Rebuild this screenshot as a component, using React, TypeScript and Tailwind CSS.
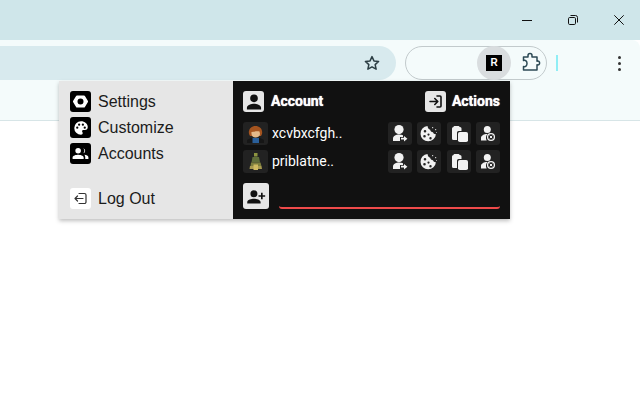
import React from "react";

const Svg = ({ children, size = 16, vb = "0 0 24 24" }: { children: React.ReactNode; size?: number; vb?: string }) => (
  <svg width={size} height={size} viewBox={vb} fill="currentColor">{children}</svg>
);

const Person = () => <path d="M12 3a4.600 4.600 0 1 1 0 9.200A4.600 4.600 0 0 1 12 3zM3.500 21v-2.200c0-3 5.600-4.600 8.500-4.600s8.500 1.600 8.500 4.600V21z" />;

const PersonGo = () => (
  <>
    <circle cx="11" cy="7.600" r="4.600" />
    <path d="M5 19v-2.600c0-2.400 3.400-3.900 6-3.900 1.600 0 3 .3 4 .8V15h-3v4z" />
    <path d="M13 15.800h3v-1.800l3.400 2.700-3.400 2.700v-1.800h-3z" />
  </>
);
const Cookie = () => (
  <>
    <path fillRule="evenodd" d="M10.500 4a7.700 7.700 0 1 0 8.400 8.200c-1.500.1-2.600-.7-2.900-2-1.500 0-2.700-1-2.800-2.500-1.500-.2-2.500-1.800-2.700-3.700zM8 8a1.300 1.300 0 1 1 0 2.600A1.300 1.300 0 0 1 8 8zM7.500 13a1.300 1.300 0 1 1 0 2.600 1.300 1.300 0 0 1 0-2.600zM11.500 11.500a1.100 1.100 0 1 1 0 2.200 1.100 1.100 0 0 1 0-2.200zM13.500 15a1.200 1.200 0 1 1 0 2.400 1.200 1.200 0 0 1 0-2.400z" />
    <rect x="15" y="5" width="1.200" height="1.200" opacity="0.8" />
    <rect x="18" y="7" width="1.200" height="1.200" opacity="0.8" />
    <rect x="19" y="10" width="1" height="1" opacity="0.6" />
  </>
);
const Paste = () => (
  <>
    <path d="M7.500 4h4a1 1 0 0 1 1 1h.5A1.500 1.500 0 0 1 14.500 6.500V9H11.500A1.500 1.500 0 0 0 10 10.500V18H6.500A1.500 1.500 0 0 1 5 16.500v-10A1.500 1.500 0 0 1 6.500 5h0a1 1 0 0 1 1-1z" />
    <rect x="11" y="10" width="10" height="10" rx="1.800" />
  </>
);
const PersonX = () => (
  <>
    <circle cx="11.300" cy="7.500" r="3.500" />
    <path d="M5 18.500v-2.700c0-2.200 3.300-3.800 6-3.800h.6A5.500 5.500 0 0 0 10 15a5 5 0 0 0 .7 3.500z" />
    <circle cx="15" cy="15" r="3.400" fill="none" stroke="currentColor" strokeWidth="1.300" />
    <path d="M13.700 13.700l2.600 2.600M16.300 13.700l-2.600 2.600" fill="none" stroke="currentColor" strokeWidth="1" />
  </>
);

const ActionBtn = ({ children }: { children: React.ReactNode }) => (
  <div className="w-6 h-[23px] rounded-[3px] bg-[#222222] text-[#f2f2f2]">
    <svg width="24" height="23" viewBox="0 0 24 23" fill="currentColor">{children}</svg>
  </div>
);

const Actions = () => (
  <div className="flex gap-[5.330px] ml-auto">
    <ActionBtn><PersonGo /></ActionBtn>
    <ActionBtn><Cookie /></ActionBtn>
    <ActionBtn><Paste /></ActionBtn>
    <ActionBtn><PersonX /></ActionBtn>
  </div>
);

const Avatar1 = () => (
  <svg width="25" height="23" viewBox="0 0 25 23">
    <rect width="25" height="23" rx="3" fill="#222222" />
    <path d="M4 21v-3l4-2h9l4 2v3z" fill="#161616" />
    <rect x="9.500" y="16" width="6.500" height="5" fill="#2a5f9a" />
    <path d="M6 12c-1-5 2.500-8 6.500-8s7.500 3 6.500 8l-1 2H7z" fill="#a5541f" />
    <path d="M8.500 10c2 0 5-1 8-.500l.5 2.500c0 2-2 3.500-4.500 3.500S8 14 8.500 10z" fill="#e3b98a" />
  </svg>
);
const Avatar2 = () => (
  <svg width="25" height="23" viewBox="0 0 25 23">
    <rect width="25" height="23" rx="3" fill="#222222" />
    <rect x="11" y="3" width="3.500" height="3.500" fill="#8d9440" />
    <path d="M9.500 7h6.500l1 5.500H8.500z" fill="#5f6d3a" />
    <path d="M8 12.500h9.500l1 3.500h-11z" fill="#7c7e3e" />
    <path d="M7 16h11.500l.5 3H6.500z" fill="#a79a50" />
    <path d="M10.500 14.500h4.500V20h-4.500z" fill="#d0bb62" />
  </svg>
);

const Row = ({ name, avatar }: { name: string; avatar: React.ReactNode }) => (
  <div className="flex items-center h-[23px]">
    {avatar}
    <span className="ml-[4px] text-[14px] text-white font-['Roboto',sans-serif]">{name}</span>
    <Actions />
  </div>
);

const MenuIcon = ({ children, light }: { children: React.ReactNode; light?: boolean }) => (
  <div className={`w-[21px] h-[21px] rounded-[3px] flex items-center justify-center ${light ? "bg-white text-[#333333]" : "bg-black text-white"}`}>
    {children}
  </div>
);

const MenuItem = ({ icon, label, light, className = "" }: { icon: React.ReactNode; label: string; light?: boolean; className?: string }) => (
  <div className={`flex items-center gap-[7px] h-[21px] ${className}`}>
    <MenuIcon light={light}>{icon}</MenuIcon>
    <span className="text-[16px] text-[#1b1b1b] font-['Liberation_Sans',sans-serif]">{label}</span>
  </div>
);

const HeadIcon = ({ children }: { children: React.ReactNode }) => (
  <div className="w-[21px] h-[21px] rounded-[3px] bg-[#e6e6e6] text-[#111111] flex items-center justify-center">
    {children}
  </div>
);

const headText = "text-[14px] font-bold text-white font-['Roboto',sans-serif] [text-shadow:0_0_1px_#ffffff]";

export default function App() {
  return (
    <div className="relative w-[640px] h-[400px] bg-white overflow-hidden font-['Liberation_Sans',sans-serif]">
      {/* Title strip */}
      <div className="h-10 bg-[#cfe6ea] flex justify-end items-center pr-4 gap-9 text-[#111111]">
        <div className="w-[10px] h-px bg-[#111111]" />
        <svg width="10" height="10" viewBox="0 0 10 10" fill="none" stroke="currentColor">
          <rect x="0.500" y="2.500" width="7" height="7" rx="1.200" />
          <path d="M2.500.5H7.500a2 2 0 0 1 2 2v5" />
        </svg>
        <svg width="10" height="10" viewBox="0 0 10 10" fill="none" stroke="currentColor">
          <path d="M.3.3l9.400 9.400M9.700.3L.3 9.700" />
        </svg>
      </div>

      {/* Toolbar */}
      <div className="h-10 bg-[#f4fbfb] rounded-tr-[8px] flex items-start pt-[6px]">
        <div className="w-[396px] h-[34px] bg-[#d8eaee] rounded-r-[17px] flex items-center justify-end pr-[15px] text-[#2c3e44]">
          <svg width="18" height="18" viewBox="0 0 24 24" fill="none" stroke="currentColor" strokeWidth="2" strokeLinejoin="round">
            <path d="M12 3.500l2.600 5.700 6.200.7-4.600 4.200 1.300 6.100L12 17.100l-5.500 3.100 1.300-6.100-4.600-4.200 6.200-.7z" />
          </svg>
        </div>
        <div className="ml-[9px] w-[142px] h-[34px] rounded-[17px] border border-[#c2cacc] flex items-center justify-end pr-[4px]">
          <div className="w-[34px] h-[34px] rounded-full bg-[#d9dddf] flex items-center justify-center">
            <div className="w-4 h-4 bg-black text-white text-[10px] font-bold leading-4 text-center">R</div>
          </div>
          <div className="ml-[9px] text-[#2c4a55]">
            <svg width="22" height="22" viewBox="0 0 22 22" fill="none" stroke="currentColor" strokeWidth="1.500" strokeLinejoin="round" className="block">
              <path d="M3.500 5H8V3.500a2 2 0 0 1 4 0V5h5v4.200c1.600-.6 2.600.3 2.600 1.800s-1 2.400-2.600 1.800V18H3.500v-3.500c2 .6 3.500-.6 3.500-3s-1.500-3.600-3.500-3z" />
            </svg>
          </div>
        </div>
        <div className="ml-[9px] mt-[9px] w-0.5 h-4 bg-[#90eef5]" />
        <div className="ml-[60px] mt-[10px] flex flex-col gap-[3px]">
          <div className="w-[3px] h-[3px] rounded-full bg-[#333333]" />
          <div className="w-[3px] h-[3px] rounded-full bg-[#333333]" />
          <div className="w-[3px] h-[3px] rounded-full bg-[#333333]" />
        </div>
      </div>

      {/* Bookmarks bar */}
      <div className="h-[41px] bg-[#f4fbfb] border-b border-[#d7e5e7]" />

      {/* Popup */}
      <div className="absolute left-[59px] top-[81px] w-[451px] h-[138px] flex shadow-[0_2px_4px_rgba(0,0,0,0.25)]">
        <div className="w-[174px] bg-[#e6e6e6] pl-[11px] pt-[10px] flex flex-col gap-[5px]">
          <MenuItem
            label="Settings"
            icon={
              <svg width="21" height="21" viewBox="0 0 21 21">
                <path fillRule="evenodd" fill="currentColor" d="M7 4.500h7a1 1 0 0 1 .9.500l2.900 4.800a1.200 1.200 0 0 1 0 1.400L14.900 16a1 1 0 0 1-.9.500H7a1 1 0 0 1-.9-.500l-2.900-4.800a1.200 1.200 0 0 1 0-1.400L6.100 5A1 1 0 0 1 7 4.500zM10.500 7.500a3 3 0 1 0 0 6 3 3 0 0 0 0-6z" />
              </svg>
            }
          />
          <MenuItem
            label="Customize"
            icon={
              <Svg size={18}>
                <path fillRule="evenodd" d="M12 3a9 9 0 0 0 0 18c1.400 0 2.300-1 2.300-2.200 0-1.300-1-1.700-.9-2.800.1-1 1-1.500 2-1.500H17a4 4 0 0 0 4-4C21 6.300 17 3 12 3zM7 10a1.500 1.500 0 1 1 0 3 1.500 1.500 0 0 1 0-3zM9.500 6a1.500 1.500 0 1 1 0 3 1.500 1.500 0 0 1 0-3zM14.500 6a1.500 1.500 0 1 1 0 3 1.500 1.500 0 0 1 0-3zM17 10a1.500 1.500 0 1 1 0 3 1.500 1.500 0 0 1 0-3z" />
              </Svg>
            }
          />
          <MenuItem
            label="Accounts"
            icon={
              <Svg size={19}>
                <path d="M9 5a3.500 3.500 0 1 1 0 7 3.500 3.500 0 0 1 0-7zM2 19v-2c0-2.500 4.500-3.500 7-3.500s7 1 7 3.500v2zM15.500 5.300a3.400 3.400 0 0 1 0 6.500 5 5 0 0 0 0-6.500zM17 13.700c2.500.4 5 1.300 5 3.300v2h-4v-2c0-1.300-.3-2.400-1-3.300z" />
              </Svg>
            }
          />
          <MenuItem
            light
            className="mt-[19px]"
            label="Log Out"
            icon={
              <svg width="15" height="15" viewBox="0 0 15 15" fill="none" stroke="currentColor" strokeWidth="1.200" strokeLinejoin="round" strokeLinecap="round">
                <path d="M6 2.500h5.500a1.500 1.500 0 0 1 1.500 1.500v7a1.500 1.500 0 0 1-1.500 1.500H6" />
                <path d="M10 7.500H2M4.500 5L2 7.500 4.500 10" />
              </svg>
            }
          />
        </div>
        <div className="flex-1 bg-[#111111] pl-[10px] pr-[10px] pt-[10px] flex flex-col">
          <div className="flex items-center justify-between h-[21px]">
            <div className="flex items-center gap-[7px]">
              <HeadIcon>
                <Svg size={20}><Person /></Svg>
              </HeadIcon>
              <span className={headText}>Account</span>
            </div>
            <div className="flex items-center gap-[6px]">
              <HeadIcon>
                <svg width="15" height="15" viewBox="0 0 15 15" fill="none" stroke="currentColor" strokeWidth="1.600" strokeLinejoin="round" strokeLinecap="round">
                  <path d="M9 2h3a1 1 0 0 1 1 1v9a1 1 0 0 1-1 1H9" />
                  <path d="M2 7.500h7.500M6.800 4.500l3 3-3 3" />
                </svg>
              </HeadIcon>
              <span className={headText}>Actions</span>
            </div>
          </div>
          <div className="mt-[10px] flex flex-col gap-[5px]">
            <Row name="xcvbxcfgh.." avatar={<Avatar1 />} />
            <Row name="priblatne.." avatar={<Avatar2 />} />
          </div>
          <div className="mt-[10px] flex items-start">
            <div className="w-[26px] h-[26px] rounded-[3px] bg-[#e6e6e6] text-[#111111] flex items-center justify-center">
              <Svg size={20}>
                <path d="M9.500 5a4.200 4.200 0 1 1 0 8.400 4.200 4.200 0 0 1 0-8.400zM1.500 21v-1.800c0-2.700 5-4 8-4s8 1.300 8 4V21zM18 8h2v3h3v2h-3v3h-2v-3h-3v-2h3z" />
              </Svg>
            </div>
            <div className="ml-[10px] mt-[22px] flex-1 h-1 border-b-2 border-[#ef4a4a] rounded-b-[3px]" />
          </div>
        </div>
      </div>
    </div>
  );
}
